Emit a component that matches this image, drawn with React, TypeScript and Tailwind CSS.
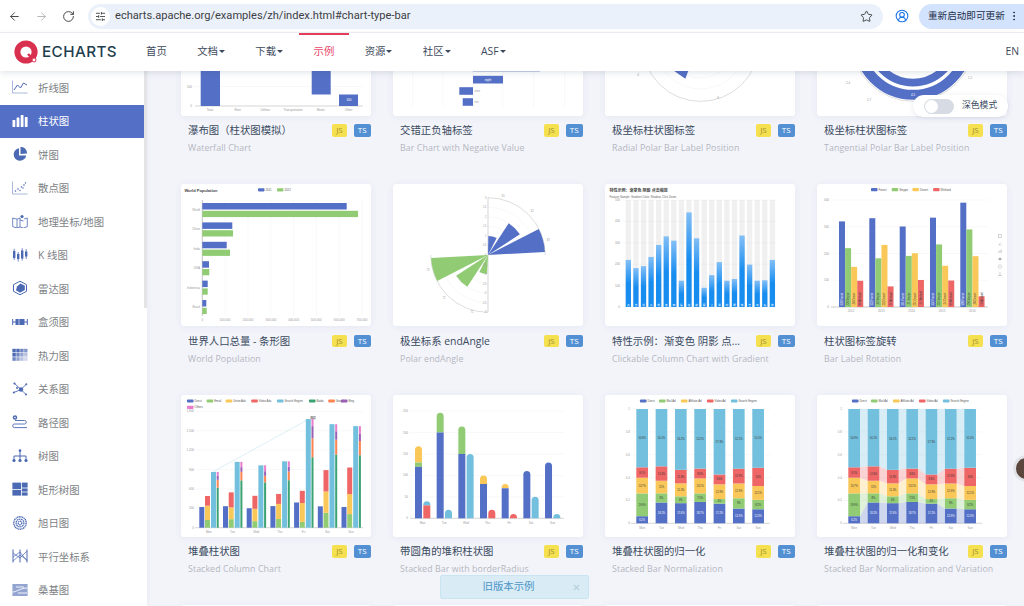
import React from "react";
import { ArrowLeft, ArrowRight, RotateCw, SlidersHorizontal, Star, CircleUserRound, EllipsisVertical, X } from "lucide-react";

const BLUE = "#5470c6", GREEN = "#91cc75", YEL = "#fac858", RED = "#ee6666", SKY = "#73c0de", AX = "#9a9a9a", GRID = "#f0f0f0";

const T = ({ x, y, s = 3, c = AX, a = "middle", w, r, children }: any) => (
  <text x={x} y={y} fontSize={s} fill={c} textAnchor={a} fontWeight={w} transform={r ? `rotate(${r} ${x} ${y})` : undefined}>{children}</text>
);
const Lg = ({ x, y, c, t, w = 6.5 }: { x: number; y: number; c: string; t: string; w?: number }) => (
  <g><rect x={x} y={y - 1.6} width={w} height={3.2} rx={0.8} fill={c} /><T x={x + w + 1} y={y + 1} a="start" s={2.8} c="#555">{t}</T></g>
);
function wedge(cx: number, cy: number, a0: number, a1: number, r: number) {
  const p = (a: number) => [cx + r * Math.sin((a * Math.PI) / 180), cy - r * Math.cos((a * Math.PI) / 180)];
  const [x0, y0] = p(a0), [x1, y1] = p(a1);
  return `M${cx} ${cy}L${x0} ${y0}A${r} ${r} 0 0 1 ${x1} ${y1}Z`;
}

function Waterfall() {
  const l = ["Total", "Rent", "Utilities", "Transportation", "Meals", "Other"];
  return <>
    <line x1="14" x2="182" y1="112.5" y2="112.5" stroke={GRID} strokeWidth=".5" />
    <line x1="14" x2="182" y1="132" y2="132" stroke="#aaa" strokeWidth=".5" />
    <T x="11" y="113.5" a="end">500</T><T x="11" y="133" a="end">0</T>
    <rect x="19.7" y="50" width="19.3" height="82" fill={BLUE} />
    <rect x="130.7" y="60" width="19" height="60.5" fill={BLUE} />
    <rect x="158" y="120.5" width="19" height="11.5" fill={BLUE} />
    <T x="168" y="127" c="#fff">300</T>
    {l.map((t, i) => <T key={t} x={29 + i * 27.7} y="137">{t}</T>)}
  </>;
}
function NegValue() {
  return <>
    {[19.7, 50, 80, 110, 140.7, 171.7].map((x) => <line key={x} x1={x} x2={x} y1="60" y2="133" stroke={GRID} strokeWidth=".5" />)}
    <rect x="80" y="88" width="67" height="9.5" fill="#8fa3dc" />
    <rect x="80" y="101.8" width="30" height="7.7" fill={BLUE} /><T x="95" y="106.7" c="#fff">eight</T>
    <rect x="66.3" y="113.2" width="13.7" height="7.6" fill={BLUE} /><T x="81.5" y="118" a="start">nine</T>
    <rect x="69.7" y="124.2" width="10.3" height="7.6" fill={BLUE} /><T x="81.5" y="129" a="start">ten</T>
  </>;
}
function RadialPolar() {
  return <>
    {[23, 35, 46].map((r) => <circle key={r} cx="95.7" cy="69" r={r} fill="none" stroke={GRID} strokeWidth=".5" />)}
    <circle cx="95.7" cy="69" r="58.4" fill="none" stroke="#bbb" strokeWidth=".5" />
    <polygon points="60,90 86,90 83,97.8 80.3,104.8 70.3,97.8" fill={BLUE} />
    <T x="33" y="102">4</T><T x="113" y="125">6</T>
  </>;
}
function Tangential() {
  return <>
    <circle cx="96" cy="65.8" r="61.5" fill="none" stroke="#d4d4d4" strokeWidth=".8" />
    <circle cx="96" cy="65.8" r="55" fill="none" stroke={BLUE} strokeWidth="10" />
    <circle cx="96" cy="65.8" r="42.8" fill="none" stroke={BLUE} strokeWidth="7.8" />
    <T x="96" y="122" c="#fff">4.5</T>
    <T x="31" y="110">2.4</T><T x="153" y="105">1.2</T><T x="52" y="127">2.7</T>
  </>;
}

function WorldPop() {
  const rows: [string, number, number][] = [["World", 165.7, 177], ["China", 51.3, 52], ["India", 45.7, 49], ["USA", 28, 28.3], ["Indonesia", 26.7, 26.7], ["Brazil", 25.3, 25.7]];
  const gx = [21.3, 44, 67, 90, 112.7, 135.3, 158.3, 181];
  const xl = ["0", "100,000", "200,000", "300,000", "400,000", "500,000", "600,000", "700,000"];
  return <>
    <T x="3.4" y="7.5" a="start" s={4} w="700" c="#444">World Population</T>
    <Lg x={77} y={5.8} c={BLUE} t="2011" /><Lg x={96} y={5.8} c={GREEN} t="2012" />
    {gx.map((x, i) => <g key={x}><line x1={x} x2={x} y1="16" y2="132" stroke={i ? GRID : "#888"} strokeWidth=".5" /><T x={x} y="137">{xl[i]}</T></g>)}
    {rows.map(([n, a, b], i) => {
      const y = 19 + i * 19.4;
      return <g key={n}>
        <rect x="21.3" y={y} width={a - 21.3} height="6.5" fill={BLUE} />
        <rect x="21.3" y={y + 7.8} width={b - 21.3} height="6.3" fill={GREEN} />
        <T x="19" y={y + 8} a="end">{n}</T>
      </g>;
    })}
  </>;
}
function PolarEnd() {
  const cx = 95, cy = 71, R = 57.3;
  const ls = ["3", "2.5", "2", "1.5", "1", "0.5", "0", "-0.5", "-1", "-1.5", "-2", "-2.5", "-3"];
  return <>
    {[1, 2, 3, 4, 5].map((k) => <g key={k}>
      <path d={`M${cx} ${cy - k * 9.55}A${k * 9.55} ${k * 9.55} 0 0 1 ${cx + k * 9.55} ${cy}`} fill="none" stroke={GRID} strokeWidth=".5" />
      <path d={`M${cx} ${cy + k * 9.55}A${k * 9.55} ${k * 9.55} 0 0 1 ${cx - k * 9.55} ${cy}`} fill="none" stroke={GRID} strokeWidth=".5" />
    </g>)}
    <path d={`M${cx} ${cy - R}A${R} ${R} 0 0 1 ${cx + R} ${cy}`} fill="none" stroke="#bbb" strokeWidth=".5" />
    <path d={`M${cx} ${cy + R}A${R} ${R} 0 0 1 ${cx - R} ${cy}`} fill="none" stroke="#bbb" strokeWidth=".5" />
    <line x1={cx} x2={cx} y1={cy - R} y2={cy + R} stroke="#aaa" strokeWidth=".5" />
    {([[1, 27, 19], [33, 57, 38], [63, 87, 57]] as number[][]).map((w) => <path key={w[0]} d={wedge(cx, cy, w[0], w[1], w[2])} fill={BLUE} />)}
    {([[183, 207, 19], [213, 237, 38], [243, 267, 57]] as number[][]).map((w) => <path key={w[0]} d={wedge(cx, cy, w[0], w[1], w[2])} fill={GREEN} />)}
    {ls.map((t, i) => <T key={t} x={cx - 1.5} y={cy - R + i * 9.55 + 1} a="end" s={2.6}>{t}</T>)}
    <T x={110} y={13} s={2.6}>S1</T><T x={139} y={28} s={2.6}>S2</T><T x={155} y={57} s={2.6}>S3</T>
    <T x={35} y={87} s={2.6}>T3</T><T x={51} y={115} s={2.6}>T2</T><T x={79} y={129} s={2.6}>T1</T>
  </>;
}
function GradientBars() {
  const v = [220, 182, 191, 234, 290, 330, 310, 123, 442, 321, 90, 149, 210, 123, 131, 334, 198, 123, 125, 220];
  const c = "点击柱子或者两指在触屏上滑动能够自动缩放".split("");
  return <>
    <defs><linearGradient id="gb" x1="0" y1="0" x2="0" y2="1"><stop offset="0" stopColor="#83bff6" /><stop offset=".5" stopColor="#188df0" /><stop offset="1" stopColor="#188df0" /></linearGradient></defs>
    <T x="4.5" y="7.5" a="start" s={4} w="700" c="#444">特性示例：渐变色 阴影 点击缩放</T>
    <T x="4.5" y="13.5" a="start" s={2.8} c="#666">Feature Sample: Gradient Color, Shadow, Click Zoom</T>
    {[500, 400, 300, 200, 100, 0].map((n, i) => <g key={n}><line x1="17" x2="171" y1={16 + i * 21.4} y2={16 + i * 21.4} stroke={GRID} strokeWidth=".5" /><T x={15} y={17 + i * 21.4} a="end">{n}</T></g>)}
    {v.map((n, i) => {
      const x = 20.7 + i * 7.58, h = n * 0.214;
      return <g key={i}>
        <rect x={x} y="16" width="5.3" height="107" fill="#b4b4b4" opacity=".2" />
        <rect x={x} y={123 - h} width="5.3" height={h} fill="url(#gb)" />
        <T x={x + 2.65} y={121.5} s={2.6} c="#fff">{c[i]}</T>
      </g>;
    })}
  </>;
}
function LabelRotation() {
  const d = [[320, 220, 150, 98], [332, 182, 232, 77], [301, 191, 201, 101], [334, 234, 154, 99], [390, 290, 190, 40]];
  const n = ["Forest", "Steppe", "Desert", "Wetland"], c = [BLUE, GREEN, YEL, RED];
  const gs = [22, 52.3, 82.7, 113, 143.3];
  return <>
    {n.map((t, i) => <Lg key={t} x={54 + i * 20.7} y={5.7} c={c[i]} t={t} />)}
    {[400, 300, 200, 100].map((v, i) => <g key={v}><line x1="14" x2="171" y1={16 + i * 26.75} y2={16 + i * 26.75} stroke={GRID} strokeWidth=".5" /><T x={12} y={17 + i * 26.75} a="end">{v}</T></g>)}
    <line x1="14" x2="171" y1="123" y2="123" stroke="#aaa" strokeWidth=".6" /><T x={12} y={124} a="end">0</T>
    {d.map((g, i) => <g key={i}>
      {g.map((v, j) => {
        const x = gs[i] + j * 6.08, h = v * 0.2675;
        return <g key={j}>
          <rect x={x} y={123 - h} width="6" height={h} fill={c[j]} />
          <T x={x + 4} y={121.5} a="start" s={2.6} c={j === 0 ? "#fff" : "#444"} r={-90}>{`${v}  ${n[j]}`}</T>
        </g>;
      })}
      <T x={gs[i] + 12} y={128}>{2012 + i}</T>
    </g>)}
    <rect x="181.6" y="50.5" width="2.6" height="3.2" fill="none" stroke="#bbb" strokeWidth=".6" />
    <path d="M181.5 61 184 58.5M182 61H184.5" stroke="#bbb" strokeWidth=".6" fill="none" />
    <path d="M181.7 69V67.5M183 69V66M184.3 69V65.5" stroke="#bbb" strokeWidth=".7" />
    <path d="M183 73.5 185 75 183 76.5 181 75Z" fill="#aaa" />
    <circle cx="183" cy="82.5" r="1.7" fill="none" stroke="#bbb" strokeWidth=".6" />
    <path d="M183 88V91M181 91.5H185" stroke="#bbb" strokeWidth=".7" />
  </>;
}
function StackedCol() {
  const s = [320, 332, 301, 334, 390, 330, 320];
  const ad = [[120, 132, 101, 134, 90, 230, 210], [220, 182, 191, 234, 290, 330, 310], [150, 232, 201, 154, 190, 330, 410]];
  const se = [862, 1018, 964, 1026, 1679, 1600, 1570];
  const rest = [[620, 732, 701, 734, 1090, 1130, 1120], [120, 132, 101, 134, 290, 230, 220], [60, 72, 71, 74, 190, 130, 110], [62, 82, 91, 84, 109, 110, 120]];
  const U = 0.0647, Y0 = 132.7;
  const lg: [number, string, string][] = [[6, BLUE, "Direct"], [25.7, GREEN, "Email"], [44.7, YEL, "Union Ads"], [70.3, RED, "Video Ads"], [96, SKY, "Search Engine"], [128, "#3ba272", "Baidu"], [147.3, "#fc8452", "Google"], [160, "#9a60b4", "Bing"]];
  const rc = ["#3ba272", "#fc8452", "#9a60b4", "#ea7ccc"], ac = [GREEN, YEL, RED];
  const gy = ["0", "300", "600", "900", "1,200", "1,500", "1,800"];
  return <>
    {lg.map(([x, c, t]) => <Lg key={t} x={x} y={6} c={c} t={t} />)}
    <Lg x={6} y={12.3} c="#ea7ccc" t="Others" />
    {gy.map((t, i) => <g key={t}><line x1="14" x2="182" y1={Y0 - i * 19.4} y2={Y0 - i * 19.4} stroke={i ? GRID : "#aaa"} strokeWidth=".5" /><T x={13} y={Y0 - i * 19.4 + 1} a="end">{t}</T></g>)}
    <line x1="32.5" y1="76.5" x2="128" y2="24" stroke="#c5e6f0" strokeWidth=".6" />
    <rect x="129" y="21" width="6" height="3.6" fill="#ddd" /><T x={132} y={24} s={2.6} c="#333">862</T>
    {s.map((v, i) => {
      const x = 18.3 + i * 23.7;
      let y1 = Y0, y2 = Y0;
      return <g key={i}>
        <rect x={x} y={Y0 - v * U} width="5" height={v * U} fill={BLUE} />
        {ad.map((a, j) => { const h = a[i] * U; y1 -= h; return <rect key={j} x={x + 5.7} y={y1} width="5" height={h} fill={ac[j]} />; })}
        <rect x={x + 11.7} y={Y0 - se[i] * U} width="5" height={se[i] * U} fill={SKY} />
        {rest.map((a, j) => { const h = a[i] * U; y2 -= h; return <rect key={j} x={x + 17.4} y={y2} width="2" height={h} fill={rc[j]} />; })}
        <T x={x + 9.5} y={137.5}>{["Mon", "Tue", "Wed", "Thu", "Fri", "Sat", "Sun"][i]}</T>
      </g>;
    })}
  </>;
}
function Rounded() {
  const a: number[][] = [[120, 10, 38, 30, 10], [200, 46, 0, 0, 20], [150, 64, 0, 0, 150], [80, 0, 20, 20, 0], [70, 0, 10, 10, 0], [110, 0, 0, 0, 50], [130, 0, 0, 0, 10]];
  const U = 0.429, Y0 = 123.3, days = ["Mon", "Tue", "Wed", "Thu", "Fri", "Sat", "Sun"];
  const top = (x: number, y: number, w: number, h: number, c: string) => {
    const r = Math.min(3.5, h);
    return <path d={`M${x} ${y + h}V${y + r}A${r} ${r} 0 0 1 ${x + r} ${y}H${x + w - r}A${r} ${r} 0 0 1 ${x + w} ${y + r}V${y + h}Z`} fill={c} />;
  };
  return <>
    {[0, 50, 100, 150, 200, 250].map((v) => <g key={v}><line x1="17" x2="171" y1={Y0 - v * U} y2={Y0 - v * U} stroke={v ? GRID : "#aaa"} strokeWidth=".5" /><T x={15} y={Y0 - v * U + 1} a="end">{v}</T></g>)}
    {a.map((d, i) => {
      const x = 22 + i * 21.67;
      const [b, g, y, r, l] = d;
      return <g key={i}>
        {y > 0 ? <>
          {top(x, Y0 - (b + g + y) * U, 7, y * U, YEL)}
          {g > 0 && <rect x={x} y={Y0 - (b + g) * U} width="7" height={g * U} fill={GREEN} />}
          <rect x={x} y={Y0 - b * U} width="7" height={b * U} fill={BLUE} />
        </> : g > 0 ? <>
          {top(x, Y0 - (b + g) * U, 7, g * U, GREEN)}
          <rect x={x} y={Y0 - b * U} width="7" height={b * U} fill={BLUE} />
        </> : top(x, Y0 - b * U, 7, b * U, BLUE)}
        {r > 0 && l > 0 ? <>
          {top(x + 8.3, Y0 - (r + l) * U, 7, l * U, SKY)}
          <rect x={x + 8.3} y={Y0 - r * U} width="7" height={r * U} fill={RED} />
        </> : r > 0 ? top(x + 8.3, Y0 - r * U, 7, r * U, RED) : top(x + 8.3, Y0 - l * U, 7, l * U, SKY)}
        <T x={x + 7.6} y={128.5}>{days[i]}</T>
      </g>;
    })}
  </>;
}
const NORM = [[6.2, 19.9, 13.7, 9.1, 50.9], [18.2, 8, 11, 12.6, 50.1], [17.6, 6, 11.3, 11.8, 53.2], [18.7, 7.5, 13.1, 8.6, 52.2], [17.2, 4, 12.9, 8.6, 57.3], [12.9, 9, 12.9, 12.9, 52.2], [12.3, 8.2, 12.1, 16, 51.4]];
function Normal({ flow }: { flow?: boolean }) {
  const c = [BLUE, GREEN, YEL, RED, SKY], n = ["Direct", "Mail Ad", "Affiliate Ad", "Video Ad", "Search Engine"];
  const lx = [35, 54, 76, 102, 126];
  const Y0 = 128.3, H = 114.3, W = 11.7, P = 19.33, X = 31.3;
  const stacks = NORM.map((d) => { let y = 0; const t = d.reduce((a, b) => a + b, 0); return d.map((v) => { const s = y; y += v / t; return [s, y]; }); });
  const days = ["Mon", "Tue", "Wed", "Thu", "Fri", "Sat", "Sun"];
  return <>
    {n.map((t, i) => <Lg key={t} x={lx[i]} y={6} c={c[i]} t={t} />)}
    {[0, 0.2, 0.4, 0.6, 0.8, 1].map((v) => <g key={v}><line x1="26" x2="165" y1={Y0 - v * H} y2={Y0 - v * H} stroke={v ? GRID : "#aaa"} strokeWidth=".5" /><T x={25} y={Y0 - v * H + 1} a="end">{v}</T></g>)}
    {flow && stacks.slice(0, 6).map((st, i) => st.map(([a, b], j) => {
      const [a2, b2] = stacks[i + 1][j], x1 = X + i * P + W, x2 = X + (i + 1) * P;
      return <polygon key={`${i}-${j}`} points={`${x1},${Y0 - a * H} ${x2},${Y0 - a2 * H} ${x2},${Y0 - b2 * H} ${x1},${Y0 - b * H}`} fill={c[j]} opacity=".28" />;
    }))}
    {stacks.map((st, i) => <g key={i}>
      {st.map(([a, b], j) => <g key={j}>
        <rect x={X + i * P} y={Y0 - b * H} width={W} height={(b - a) * H} fill={c[j]} />
        <T x={X + i * P + W / 2} y={Y0 - ((a + b) / 2) * H + 1} s={2.6} c={j === 0 ? "#fff" : "#333"}>{`${NORM[i][j]}%`}</T>
      </g>)}
      <T x={X + i * P + W / 2} y={133.5}>{days[i]}</T>
    </g>)}
  </>;
}

type Card = { t: string; e: string; c?: React.ReactNode };
const cards: Card[] = [
  { t: "瀑布图（柱状图模拟）", e: "Waterfall Chart", c: <Waterfall /> },
  { t: "交错正负轴标签", e: "Bar Chart with Negative Value", c: <NegValue /> },
  { t: "极坐标柱状图标签", e: "Radial Polar Bar Label Position", c: <RadialPolar /> },
  { t: "极坐标柱状图标签", e: "Tangential Polar Bar Label Position", c: <Tangential /> },
  { t: "世界人口总量 - 条形图", e: "World Population", c: <WorldPop /> },
  { t: "极坐标系 endAngle", e: "Polar endAngle", c: <PolarEnd /> },
  { t: "特性示例：渐变色 阴影 点...", e: "Clickable Column Chart with Gradient", c: <GradientBars /> },
  { t: "柱状图标签旋转", e: "Bar Label Rotation", c: <LabelRotation /> },
  { t: "堆叠柱状图", e: "Stacked Column Chart", c: <StackedCol /> },
  { t: "带圆角的堆积柱状图", e: "Stacked Bar with borderRadius", c: <Rounded /> },
  { t: "堆叠柱状图的归一化", e: "Stacked Bar Normalization", c: <Normal /> },
  { t: "堆叠柱状图的归一化和变化", e: "Stacked Bar Normalization and Variation", c: <Normal flow /> },
  { t: "", e: "" }, { t: "", e: "" }, { t: "", e: "" }, { t: "", e: "" },
];

const Ic = ({ children }: any) => (
  <svg viewBox="0 0 16 14" className="w-4 h-[14px] mb-[1px] shrink-0" fill="none" stroke="currentColor" strokeWidth=".8">{children}</svg>
);
const side: [string, React.ReactNode][] = [
  ["折线图", <Ic><path d="M.5 .5V13H15.5" opacity=".6" /><path d="M2 10 5.5 5l3 3 3-5L15 5" strokeWidth="1" /></Ic>],
  ["柱状图", <Ic><g fill="currentColor" stroke="none"><rect x="0.5" y="6" width="2.8" height="7" rx=".6" /><rect x="4.6" y="3.5" width="2.8" height="9.5" rx=".6" /><rect x="8.7" y="1" width="2.8" height="12" rx=".6" /><rect x="12.8" y="3" width="2.8" height="10" rx=".6" /></g></Ic>],
  ["饼图", <Ic><g fill="currentColor" stroke="none"><path d="M7 1.2A6.3 6.3 0 1 0 14.2 8.4H7Z" /><path d="M8.5 0A6 6 0 0 1 15 6.4L8.5 7Z" /></g></Ic>],
  ["散点图", <Ic><path d="M.5 .5V13H15.5" opacity=".6" /><g fill="currentColor" stroke="none"><circle cx="3.5" cy="10" r=".8" /><circle cx="6" cy="8" r=".8" /><circle cx="8" cy="9.5" r=".7" /><circle cx="9.5" cy="6" r=".8" /><circle cx="12" cy="4" r=".8" /><circle cx="13.5" cy="2" r=".7" /><circle cx="11" cy="7" r=".7" /></g></Ic>],
  ["地理坐标/地图", <Ic><path d="M.7 4 5 5.2 8 4v9L5 14 .7 12.6ZM5 5.2V14M8 13l3.5 1 3.8-1.4V4L12 5M8 6 11.5 7" /><circle cx="10" cy="2.5" r="1.6" fill="currentColor" stroke="none" /></Ic>],
  ["K 线图", <Ic><g fill="currentColor" stroke="none"><rect x="1" y="3" width="2.4" height="7" /><rect x="5" y="6" width="2.4" height="5" /><rect x="9" y="2.5" width="2.4" height="8" /><rect x="13" y="3.5" width="2.4" height="5" /></g><path d="M2.2 .8V12M6.2 4V13.5M10.2 .2V12.5M14.2 1V11" /></Ic>],
  ["雷达图", <Ic><path d="M8 .2 14.5 3.7V10.3L8 13.8 1.5 10.3V3.7Z" strokeWidth="1" /><path d="M8.5 2.5 12.8 4.8V9L8 11.8 4 9.2 5 5.5Z" fill="currentColor" stroke="none" /></Ic>],
  ["盒须图", <Ic><path d="M.7 4V10M15.3 4V10M.7 7H4M12 7H15.3" strokeWidth="1" /><rect x="3.5" y="4" width="9" height="6" fill="currentColor" stroke="none" /><path d="M7 4V10" stroke="#fff" strokeWidth=".6" /></Ic>],
  ["热力图", <Ic><g fill="currentColor" stroke="none">{[0, 1, 2].map((r) => [0, 1, 2, 3].map((c) => <rect key={`${r}${c}`} x={.4 + c * 3.9} y={.8 + r * 4.2} width="3.4" height="3.6" opacity={[[1, 1, .8, .7], [1, .8, .6, .4], [.8, .6, .4, .25]][r][c]} />))}</g></Ic>],
  ["关系图", <Ic><path d="M2.5 1.5 9 7.5M1.8 10.5 9 7.5M14.3 2.2 9 7.5M14 12.5 9 7.5" strokeWidth=".9" /><g fill="currentColor" stroke="none"><circle cx="9" cy="7.5" r="2.2" /><circle cx="2.5" cy="1.5" r="1.1" /><circle cx="1.8" cy="10.5" r="1" /><circle cx="14.3" cy="2.2" r="1" /><circle cx="14" cy="12.5" r="1" /><circle cx="5" cy="6" r="1" /></g></Ic>],
  ["路径图", <Ic><path d="M3 5.5H12.5a1.7 1.7 0 0 1 0 3.5H2.5a1.8 1.8 0 0 0 0 3.6H15" strokeWidth=".9" /><circle cx="3" cy="2.5" r="2.2" fill="currentColor" stroke="none" /><circle cx="3" cy="2.5" r=".8" fill="#fff" stroke="none" /></Ic>],
  ["树图", <Ic><path d="M8 2V11M2 11V7H14V11" strokeWidth="1" /><g fill="currentColor" stroke="none"><circle cx="8" cy="1.6" r="1.3" /><circle cx="2" cy="11.5" r="1.6" /><circle cx="8" cy="11.5" r="1.6" /><circle cx="14" cy="11.5" r="1.6" /></g></Ic>],
  ["矩形树图", <Ic><g fill="currentColor" stroke="none"><rect x=".4" y=".6" width="8.6" height="6.4" /><rect x=".4" y="7.8" width="8.6" height="5.8" /><rect x="9.8" y=".6" width="5.8" height="5" /><rect x="9.8" y="6.4" width="5.8" height="3.2" /><rect x="9.8" y="10.4" width="5.8" height="3.2" /></g></Ic>],
  ["旭日图", <Ic><circle cx="8" cy="7" r="6.2" strokeWidth="1.4" strokeDasharray="1.2 .5" /><circle cx="8" cy="7" r="3.9" strokeWidth="1.2" strokeDasharray="1.6 .5" /><circle cx="8" cy="7" r="1.8" strokeWidth="1.2" strokeDasharray="1.4 .5" /></Ic>],
  ["平行坐标系", <Ic><path d="M1 .5V13.5M8 .5V13.5M15 .5V13.5" strokeWidth="1" /><path d="M1 8 8 3l7 9M1 4 8 9l7-7M1 12 8 6l7 5" strokeWidth=".7" /></Ic>],
  ["桑基图", <Ic><rect x=".4" y="1" width="15.2" height="12" fill="currentColor" stroke="none" opacity=".6" /><path d="M.4 9C5 9 8 5 15.6 5M4 4H12M6 10H15" stroke="#fff" strokeWidth=".9" /></Ic>],
];

const navs: [string, boolean][] = [["首页", false], ["文档", true], ["下载", true], ["示例", false], ["资源", true], ["社区", true], ["ASF", true]];
const FONT = "[font-family:'Open_Sans','Noto_Sans_CJK_SC',sans-serif]";

export default function App() {
  return (
    <div className={`relative w-[1024px] h-[606px] overflow-hidden flex flex-col bg-white ${FONT}`}>
      {/* browser toolbar */}
      <div className="h-[33px] shrink-0 flex items-center bg-white pl-2 border-b border-[#eef0f4]">
        <div className="flex items-center gap-[14px] text-[#444746] w-[80px]">
          <ArrowLeft size={13} strokeWidth={1.8} />
          <ArrowRight size={13} strokeWidth={1.8} className="text-[#b5b7ba]" />
          <RotateCw size={13} strokeWidth={1.8} />
        </div>
        <div className="w-[795px] h-[25px] rounded-full bg-[#ebf1fa] flex items-center pl-[3px] pr-[10px]">
          <div className="w-[19px] h-[19px] rounded-full bg-white flex items-center justify-center text-[#444746]"><SlidersHorizontal size={11} /></div>
          <span className="ml-[5px] text-[11.1px] text-[#3c4043] [font-family:Roboto,sans-serif] flex-1">echarts.apache.org/examples/zh/index.html#chart-type-bar</span>
          <Star size={13} strokeWidth={1.8} className="text-[#444746]" />
        </div>
        <CircleUserRound size={14} strokeWidth={1.8} className="ml-[12px] text-[#1a73e8]" />
        <div className="ml-[10px] h-[25px] flex-1 rounded-l-full bg-[#d3e3fd] flex items-center pl-[9px] text-[#1f2f4a] text-[9.6px] whitespace-nowrap">
          重新启动即可更新<EllipsisVertical size={12} className="ml-[3px] text-[#1f2f4a]" />
        </div>
      </div>
      {/* site nav */}
      <div className="relative z-20 h-[38px] shrink-0 flex items-center bg-white shadow-[0_2px_6px_rgba(60,70,100,0.14)]">
        <svg viewBox="0 0 24 24" className="ml-[14px] w-[24px] h-[24px] shrink-0">
          <circle cx="12" cy="12" r="8.6" fill="none" stroke="#d9304f" strokeWidth="6" />
          <path d="M14 14 21 21" stroke="#d9304f" strokeWidth="2.4" />
          <circle cx="20" cy="20" r="2" fill="#fff" stroke="#d9304f" strokeWidth="1" />
        </svg>
        <span className="ml-[4px] w-[78px] text-[15.2px] leading-none font-medium tracking-[0.03em] text-[#1d3d4d] [font-family:Inter,sans-serif]">ECHARTS</span>
        <div className="ml-[26px] flex items-center gap-[30.4px] text-[10.4px] text-[#3d4a5c]">
          {navs.map(([t, d]) => (
            <div key={t} className={`relative flex items-center ${t === "示例" ? "text-[#e8486a]" : ""}`}>
              {t === "示例" && <div className="absolute left-[-15px] right-[-15px] top-[-11px] h-[2px] bg-[#e43c59]" />}
              {t}
              {d && <span className="ml-[1px] border-x-[3px] border-x-transparent border-t-[3px] border-t-[#3d4a5c]" />}
            </div>
          ))}
        </div>
        <span className="ml-auto mr-[5px] text-[10.4px] text-[#3d4a5c]">EN</span>
      </div>
      <div className="relative flex-1 min-h-0 flex">
        {/* sidebar */}
        <div className="relative z-10 w-[147px] shrink-0 flex bg-white overflow-hidden shadow-[1px_0_4px_rgba(60,70,100,0.05)]">
          <div className="w-[144px] shrink-0">
            {side.map(([t, ic]) => (
              <div key={t} className={`h-[33.5px] flex items-center pl-[12px] gap-[10px] text-[10.4px] ${t === "柱状图" ? "bg-[#5470c6] text-white" : "text-[#7d7f85]"}`}>
                <span className={`flex ${t === "柱状图" ? "text-white" : "text-[#4c69b3]"}`}>{ic}</span>
                <span className="whitespace-nowrap mt-[2px]">{t}</span>
              </div>
            ))}
          </div>
          <div className="w-[3px] shrink-0"><div className="h-[237px] bg-[#e4e4e7]" /></div>
        </div>
        {/* main */}
        <div className="relative flex-1 min-w-0 overflow-hidden bg-[#f3f4fa] pl-[34px]">
          <div className="grid grid-cols-[190px_190px_190px_190px] gap-x-[22px] gap-y-[29px] -mt-[97.5px]">
            {cards.map((c, i) => (
              <div key={i} className="flex flex-col">
                <div className="h-[142px] rounded-[3px] bg-white shadow-[0_1px_6px_rgba(110,120,170,0.1)] overflow-hidden">
                  <svg viewBox="0 0 190 142" className="block w-full h-full [font-family:'Liberation_Sans','Noto_Sans_CJK_SC',sans-serif]">{c.c}</svg>
                </div>
                {c.t && <div className="mt-[8.5px] pl-[7px] h-[13px] flex items-center">
                  <span className="flex-1 min-w-0 whitespace-nowrap text-[10.4px] leading-[13px] text-[#3a4a5e]">{c.t}</span>
                  <span className="ml-[8px] w-[15px] h-[12.5px] rounded-[2px] bg-[#f5e04f] text-[#a39232] text-[8px] leading-[12.5px] text-center shrink-0">JS</span>
                  <span className="ml-[6.5px] w-[17.5px] h-[12.5px] rounded-[2px] bg-[#5290d3] text-white text-[8px] leading-[12.5px] text-center shrink-0">TS</span>
                </div>}
                {c.e && <div className="mt-[5px] pl-[7px] text-[8.8px] leading-[13px] tracking-[0.01em] text-[#b4b7bf] whitespace-nowrap">{c.e}</div>}
              </div>
            ))}
          </div>
          {/* toast */}
          <div className="absolute left-[293px] bottom-[7px] w-[149px] h-[24px] rounded-[2px] border border-[#c8e5f2] bg-[#d9ecf6] flex items-center justify-center pr-[12px] text-[10.4px] text-[#4a94c6]">
            旧版本示例
            <X size={9} strokeWidth={3} className="absolute right-[7px] text-[#b6cfdb]" />
          </div>
          {/* dark mode toggle */}
          <div className="absolute top-[24px] right-[16px] w-[95px] h-[22px] rounded-full bg-white shadow-[0_1px_5px_rgba(90,100,140,0.15)] flex items-center pl-[11px] text-[8.8px] text-[#3a4a5e]">
            <div className="w-[30px] h-[15px] rounded-full bg-[#d7dbe3] flex items-center pl-[1px]"><div className="w-[13px] h-[13px] rounded-full bg-white" /></div>
            <span className="ml-[8px]">深色模式</span>
          </div>
          {/* floating avatar */}
          <div className="absolute right-[-16px] top-[384px] w-[27px] h-[27px] rounded-full bg-[#e2e3e8] flex items-center justify-center">
            <div className="w-[21px] h-[21px] rounded-full bg-[#5b463d]" />
          </div>
        </div>
      </div>
    </div>
  );
}
